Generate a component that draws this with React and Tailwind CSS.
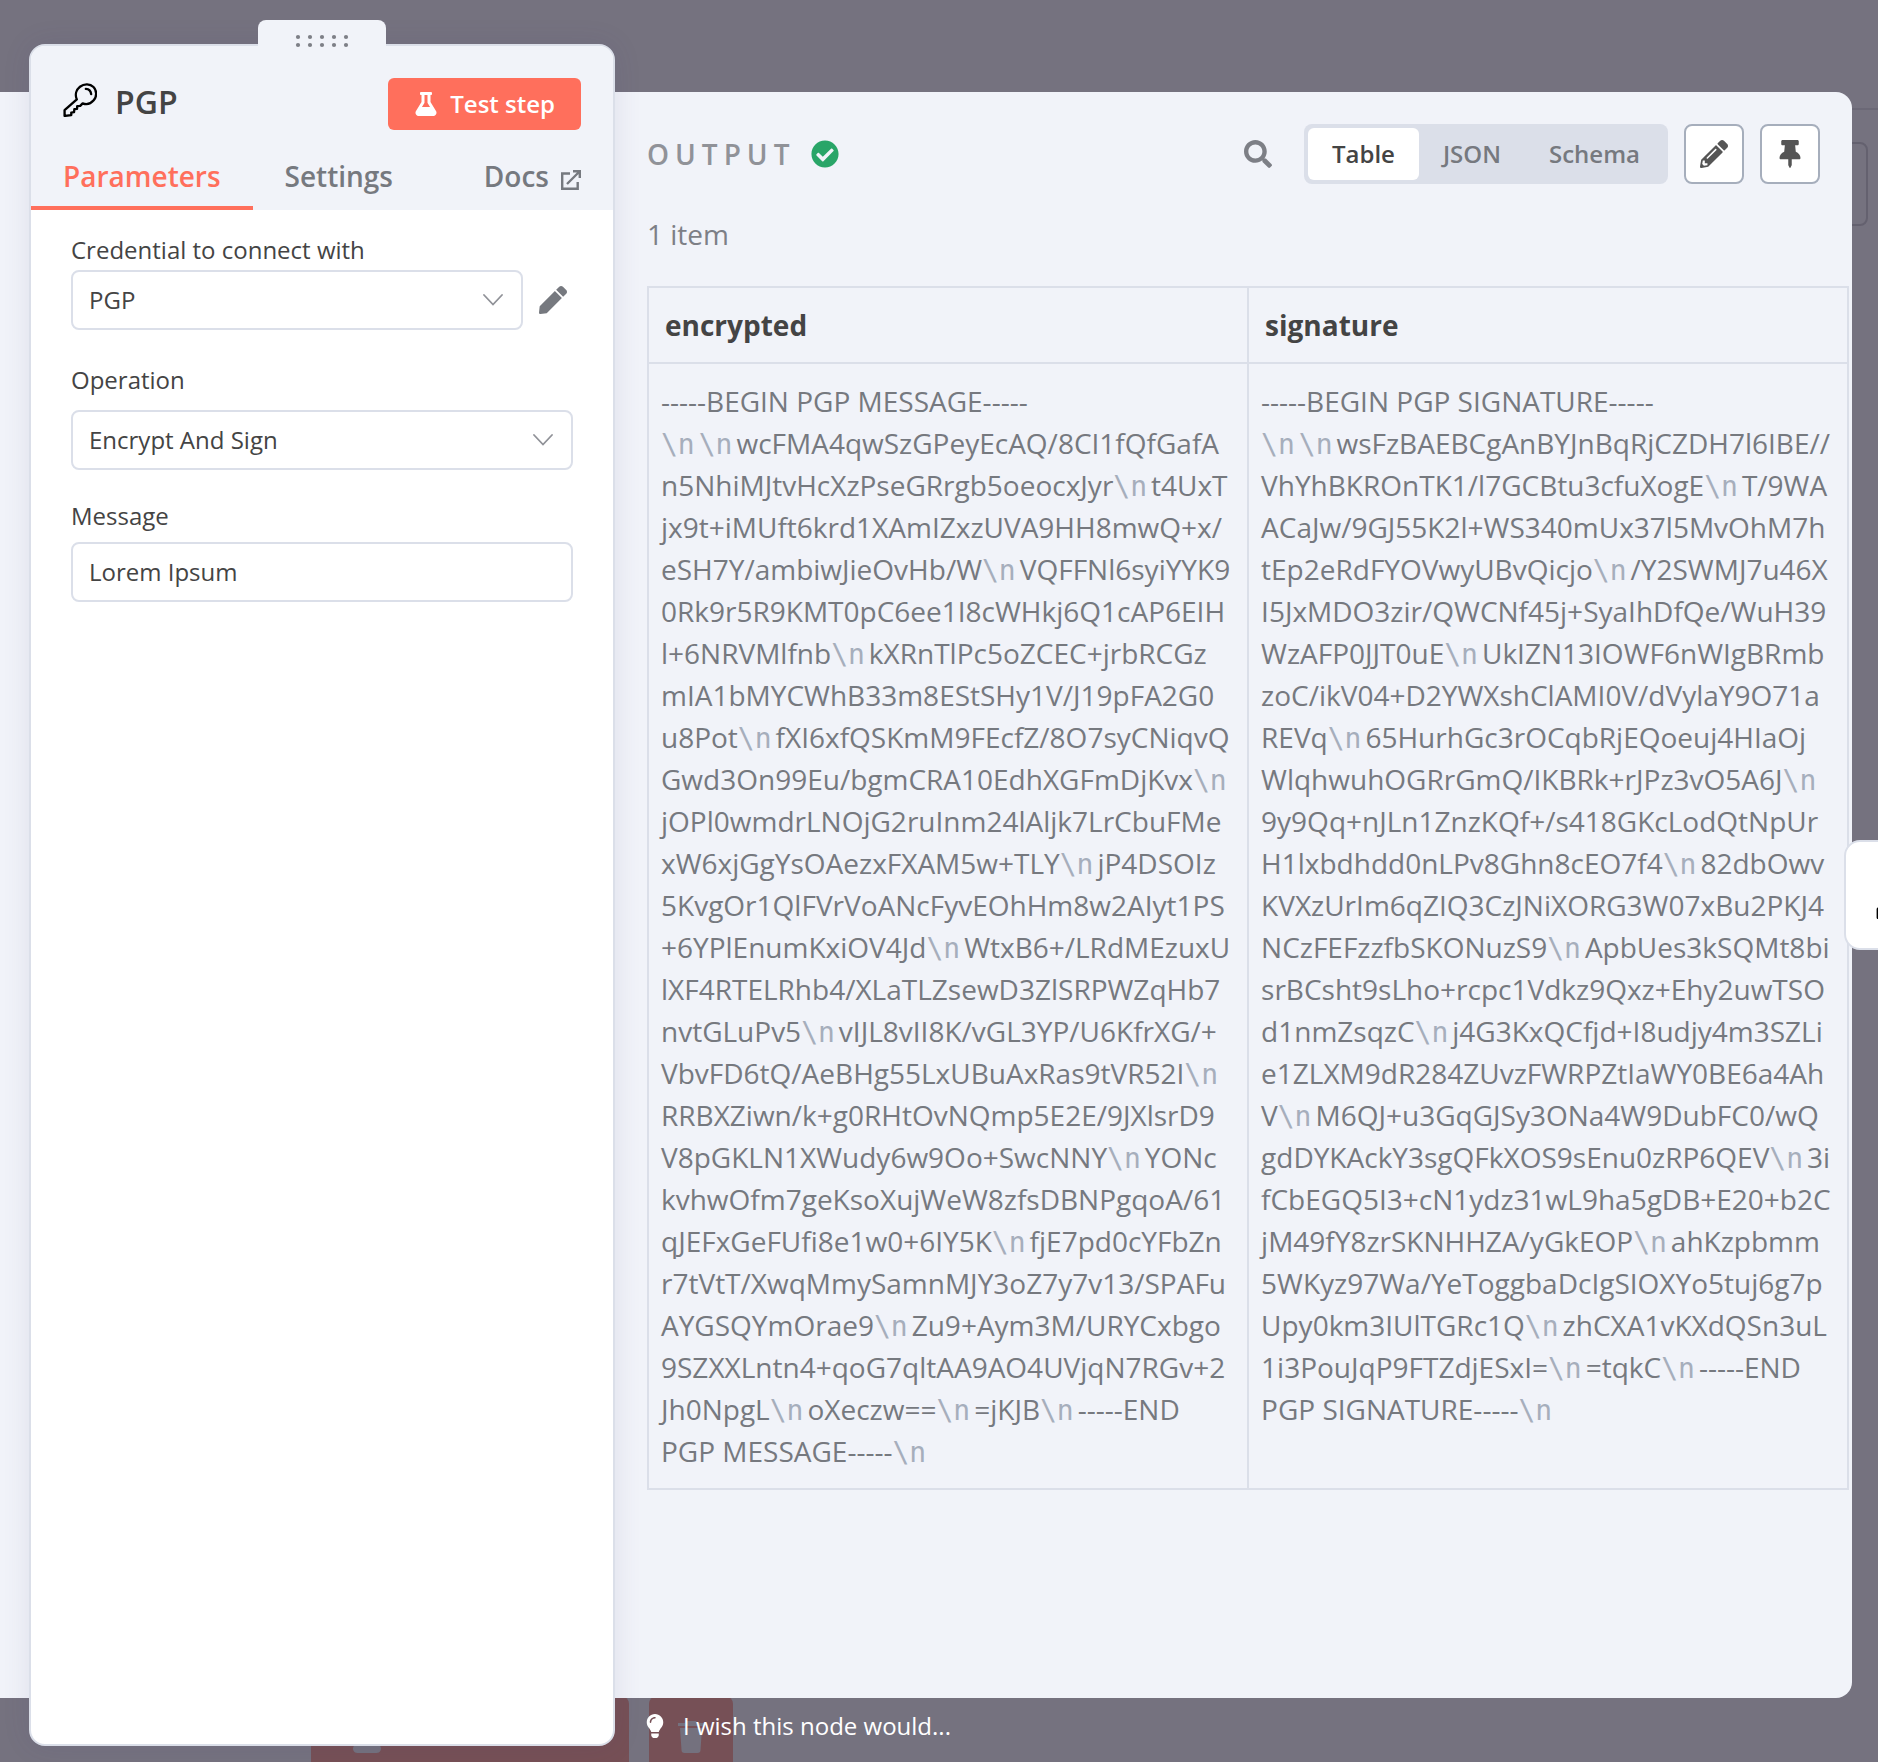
import { FaSearch, FaPencilAlt, FaThumbtack, FaFlask, FaCheckCircle, FaLightbulb, FaPen } from "react-icons/fa";

const encrypted = [
  "-----BEGIN PGP MESSAGE-----",
  "\n\nwcFMA4qwSzGPeyEcAQ/8CI1fQfGafA",
  "n5NhiMJtvHcXzPseGRrgb5oeocxJyr\nt4UxT",
  "jx9t+iMUft6krd1XAmIZxzUVA9HH8mwQ+x/",
  "eSH7Y/ambiwJieOvHb/W\nVQFFNl6syiYYK9",
  "0Rk9r5R9KMT0pC6ee1I8cWHkj6Q1cAP6EIH",
  "l+6NRVMlfnb\nkXRnTlPc5oZCEC+jrbRCGz",
  "mIA1bMYCWhB33m8EStSHy1V/J19pFA2G0",
  "u8Pot\nfXI6xfQSKmM9FEcfZ/8O7syCNiqvQ",
  "Gwd3On99Eu/bgmCRA10EdhXGFmDjKvx\n",
  "jOPl0wmdrLNOjG2ruInm24lAljk7LrCbuFMe",
  "xW6xjGgYsOAezxFXAM5w+TLY\njP4DSOIz",
  "5KvgOr1QlFVrVoANcFyvEOhHm8w2AIyt1PS",
  "+6YPlEnumKxiOV4Jd\nWtxB6+/LRdMEzuxU",
  "lXF4RTELRhb4/XLaTLZsewD3ZlSRPWZqHb7",
  "nvtGLuPv5\nvIJL8vII8K/vGL3YP/U6KfrXG/+",
  "VbvFD6tQ/AeBHg55LxUBuAxRas9tVR52I\n",
  "RRBXZiwn/k+g0RHtOvNQmp5E2E/9JXlsrD9",
  "V8pGKLN1XWudy6w9Oo+SwcNNY\nYONc",
  "kvhwOfm7geKsoXujWeW8zfsDBNPgqoA/61",
  "qJEFxGeFUfi8e1w0+6IY5K\nfjE7pd0cYFbZn",
  "r7tVtT/XwqMmySamnMJY3oZ7y7v13/SPAFu",
  "AYGSQYmOrae9\nZu9+Aym3M/URYCxbgo",
  "9SZXXLntn4+qoG7qltAA9AO4UVjqN7RGv+2",
  "Jh0NpgL\noXeczw==\n=jKJB\n-----END",
  "PGP MESSAGE-----\n",
];

const signature = [
  "-----BEGIN PGP SIGNATURE-----",
  "\n\nwsFzBAEBCgAnBYJnBqRjCZDH7l6IBE//",
  "VhYhBKROnTK1/l7GCBtu3cfuXogE\nT/9WA",
  "ACaJw/9GJ55K2l+WS340mUx37l5MvOhM7h",
  "tEp2eRdFYOVwyUBvQicjo\n/Y2SWMJ7u46X",
  "I5JxMDO3zir/QWCNf45j+SyaIhDfQe/WuH39",
  "WzAFP0JJT0uE\nUkIZN13IOWF6nWIgBRmb",
  "zoC/ikV04+D2YWXshClAMI0V/dVylaY9O71a",
  "REVq\n65HurhGc3rOCqbRjEQoeuj4HIaOj",
  "WlqhwuhOGRrGmQ/IKBRk+rJPz3vO5A6J\n",
  "9y9Qq+nJLn1ZnzKQf+/s418GKcLodQtNpUr",
  "H1lxbdhdd0nLPv8Ghn8cEO7f4\n82dbOwv",
  "KVXzUrIm6qZIQ3CzJNiXORG3W07xBu2PKJ4",
  "NCzFEFzzfbSKONuzS9\nApbUes3kSQMt8bi",
  "srBCsht9sLho+rcpc1Vdkz9Qxz+Ehy2uwTSO",
  "d1nmZsqzC\nj4G3KxQCfjd+I8udjy4m3SZLi",
  "e1ZLXM9dR284ZUvzFWRPZtIaWY0BE6a4Ah",
  "V\nM6QJ+u3GqGJSy3ONa4W9DubFC0/wQ",
  "gdDYKAckY3sgQFkXOS9sEnu0zRP6QEV\n3i",
  "fCbEGQ5I3+cN1ydz31wL9ha5gDB+E20+b2C",
  "jM49fY8zrSKNHHZA/yGkEOP\nahKzpbmm",
  "5WKyz97Wa/YeToggbaDcIgSIOXYo5tuj6g7p",
  "Upy0km3IUlTGRc1Q\nzhCXA1vKXdQSn3uL",
  "1i3PouJqP9FTZdjESxI=\n=tqkC\n-----END",
  "PGP SIGNATURE-----\n",
];

function ArmoredText({ lines }) {
  return lines.map((line, i) => (
    <div key={i} className="whitespace-nowrap">
      {line.split("\n").map((part, j) => (
        <span key={j}>
          {j > 0 && <span className="pr-1 font-['DejaVu_Sans_Mono',monospace] text-[28px] leading-none text-[#a6aebc]">\n</span>}
          {part}
        </span>
      ))}
    </div>
  ));
}

function KeyIcon({ className }) {
  return (
    <svg viewBox="0 0 32 32" className={className} fill="none" stroke="#000" strokeWidth="2.2" strokeLinejoin="round" strokeLinecap="round" aria-hidden="true">
      <path d="M13 15.5c-1.8-4.200-.8-9 3-12 4-3.200 9.500-2.900 12.700.3s3.400 8.700.2 12.500c-2.800 3.300-7 4.200-10.400 2.900l-2.300 2.300-2.800.2-.2 2.600-2.500.3-.3 2.800-2.600.4v2.400L1.500 31v-5.500z" />
      <path d="M21.500 5.500c3 .2 4.700 2 5 5" />
    </svg>
  );
}

function Chevron() {
  return (
    <svg viewBox="0 0 20 12" className="pointer-events-none absolute right-5 top-1/2 h-3 w-5 -translate-y-1/2" fill="none" stroke="#909298" strokeWidth="1.8" strokeLinecap="round" aria-hidden="true">
      <path d="M1 1l9 9.500L19 1" />
    </svg>
  );
}

function SelectField({ id, value }) {
  return (
    <div className="relative min-w-0 flex-1">
      <select id={id} className="h-[60px] w-full appearance-none rounded-lg border-2 border-[#dbdfe9] bg-white px-4 text-2xl text-[#444]">
        <option>{value}</option>
      </select>
      <Chevron />
    </div>
  );
}

function NodePanel() {
  return (
    <section className="absolute bottom-4 left-[29px] top-[44px] z-10 flex w-[586px] flex-col rounded-2xl border-2 border-[#dbdfe9] bg-white shadow-[0_0_28px_rgba(70,60,120,0.11)]">
      <div className="absolute -top-[26px] left-1/2 flex h-8 w-32 -translate-x-1/2 justify-center rounded-t-lg bg-[#f1f3f9] pt-3.5">
        <svg viewBox="0 0 54 14" className="h-3.5 w-[54px]" fill="#7d7f86" aria-hidden="true">
          {[3, 15, 27, 39, 51].map((x) => (
            <g key={x}>
              <circle cx={x} cy="3" r="2.1" />
              <circle cx={x} cy="11" r="2.1" />
            </g>
          ))}
        </svg>
      </div>
      <header className="rounded-t-[14px] bg-[#f1f3f9] pt-8">
        <div className="flex items-center px-8">
          <KeyIcon className="mb-2 size-[34px]" />
          <h1 className="ml-[18px] flex-1 pb-1 text-[32px] font-semibold leading-10 text-[#444]">PGP</h1>
          <button className="flex h-[52px] items-center gap-3 rounded-md bg-[#ff6f5c] px-[26px] text-2xl font-semibold text-white">
            <FaFlask className="size-6" />
            Test step
          </button>
        </div>
        <nav className="mt-5 flex h-[60px] text-[28px] font-semibold leading-[52px] text-[#76797f]">
          <a href="#parameters" className="border-b-4 border-[#ff6f5c] px-8 text-[#ff6f5c]">Parameters</a>
          <a href="#settings" className="px-8">Settings</a>
          <a href="#docs" className="ml-auto flex pr-8">
            Docs
            <svg viewBox="0 0 20 20" className="ml-3 mt-5 size-5" fill="none" stroke="#76797f" strokeWidth="2.4" aria-hidden="true">
              <path d="M9 3.500H1.200v15.300h15.500V12M6 14L18 2M12 1.200h6.800V8" />
            </svg>
          </a>
        </nav>
      </header>
      <form className="flex flex-col px-10 pt-6 text-2xl text-[#444]">
        <label htmlFor="credential" className="leading-8">Credential to connect with</label>
        <div className="mt-1 flex items-center">
          <SelectField id="credential" value="PGP" />
          <button type="button" aria-label="Edit credential" className="ml-4 mr-1.5 text-[#76797f]">
            <FaPen className="size-7" />
          </button>
        </div>
        <label htmlFor="operation" className="mt-8.5 leading-8">Operation</label>
        <div className="mt-3.5 flex"><SelectField id="operation" value="Encrypt And Sign" /></div>
        <label htmlFor="message" className="mt-7.5 leading-8">Message</label>
        <input id="message" defaultValue="Lorem Ipsum" className="mt-2.5 h-[60px] w-full rounded-lg border-2 border-[#dbdfe9] px-4 pb-0.5" />
      </form>
    </section>
  );
}

function OutputPanel() {
  return (
    <section className="mr-[26px] flex flex-1 flex-col rounded-r-2xl bg-[#f1f3f9] pl-[647px] pt-8">
      <header className="flex items-center pr-8">
        <h2 className="text-[28px] font-semibold tracking-[6px] text-[#909298]">OUTPUT</h2>
        <FaCheckCircle className="ml-4 size-7 text-[#29a568]" />
        <button aria-label="Search" className="ml-auto text-[#7d7f86]">
          <FaSearch className="size-7" />
        </button>
        <div className="ml-8 flex h-[60px] rounded-lg bg-[#dbdfe9] p-1 text-2xl font-semibold text-[#76797f]">
          <button className="rounded-md bg-white px-6 text-[#444]">Table</button>
          <button className="px-6">JSON</button>
          <button className="px-6">Schema</button>
        </div>
        <button aria-label="Edit output" className="ml-4 grid size-[60px] place-items-center rounded-lg border-2 border-[#a6aebc] bg-white text-[#555]">
          <FaPencilAlt className="size-7" />
        </button>
        <button aria-label="Pin data" className="ml-4 grid size-[60px] place-items-center rounded-lg border-2 border-[#a6aebc] bg-white text-[#555]">
          <FaThumbtack className="size-7" />
        </button>
      </header>
      <p className="mt-7.5 text-[28px] leading-10 text-[#7d7f86]">1 item</p>
      <table className="mr-[3px] mt-8 table-fixed border-collapse text-left">
        <thead>
          <tr className="h-[76px] text-[28px] text-[#444]">
            <th className="border-2 border-[#dbdfe9] px-4 font-bold">encrypted</th>
            <th className="border-2 border-[#dbdfe9] px-4 font-bold">signature</th>
          </tr>
        </thead>
        <tbody>
          <tr className="align-top text-[28px] leading-[42px] text-[#76797f]">
            <td className="border-2 border-[#dbdfe9] px-3 py-4"><ArmoredText lines={encrypted} /></td>
            <td className="border-2 border-[#dbdfe9] px-3 py-4"><ArmoredText lines={signature} /></td>
          </tr>
        </tbody>
      </table>
    </section>
  );
}

function CanvasActions() {
  return (
    <div className="absolute bottom-0 left-[311px] flex h-[66px] gap-5 text-[#74717e]">
      <button className="flex w-[318px] items-center justify-center gap-4 rounded-t-lg bg-[#765056] pt-4 text-[28px] font-semibold">
        <FaFlask className="size-8" />
        <span className="pb-3">Test workflow</span>
      </button>
      <button aria-label="Delete execution" className="grid w-[84px] place-items-center rounded-t-lg bg-[#765056] pt-4">
        <svg viewBox="0 0 28 32" className="h-8 w-7" fill="currentColor" aria-hidden="true">
          <path d="M9 0h10l1 2h7v3H1V2h7zM3 7h22l-1.500 22a3 3 0 0 1-3 3h-13a3 3 0 0 1-3-3z" />
        </svg>
      </button>
    </div>
  );
}

export default function App() {
  return (
    <main className="relative flex min-h-screen flex-col overflow-hidden bg-[#75727f] pt-[92px] font-['Open_Sans',sans-serif]">
      <div className="absolute right-0 top-[108px] h-0.5 w-8 bg-[#6b6876]" />
      <div className="absolute right-2.5 top-[142px] h-[84px] w-10 rounded-lg border-2 border-[#64616f]" />
      <CanvasActions />
      <div className="relative flex flex-1">
        <OutputPanel />
      </div>
      <footer className="relative flex h-16 items-center gap-4 pb-2 pl-[643px] text-2xl text-white">
        <FaLightbulb className="size-6" />
        <a href="#feedback">I wish this node would...</a>
      </footer>
      <NodePanel />
      <button aria-label="Open next node" className="absolute -right-[78px] top-[840px] z-10 grid h-[110px] w-28 place-items-center rounded-2xl border-2 border-[#dbdfe9] bg-white">
        <KeyIcon className="size-12" />
      </button>
    </main>
  );
}
